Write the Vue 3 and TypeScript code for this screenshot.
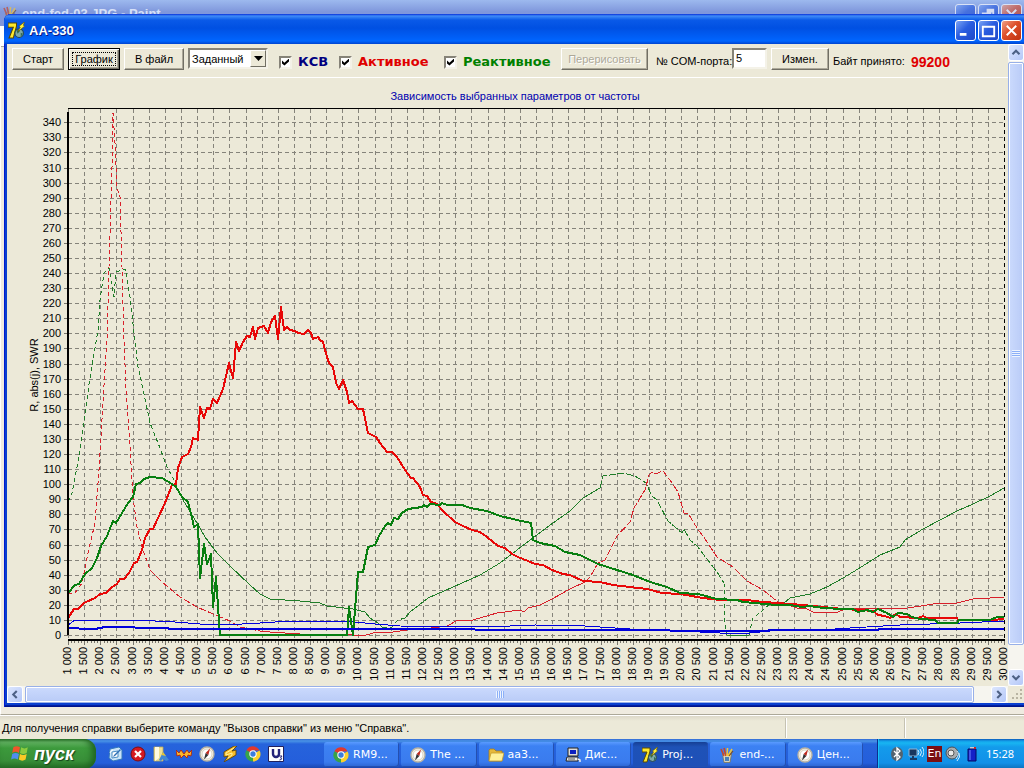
<script setup lang="ts">
import { ref } from 'vue'

interface Trace { cls: string; points: string }
interface Task { icon: string; label: string; active?: boolean }

const swr = ref(true)
const active = ref(true)
const reactive = ref(true)
const range = ref('Заданный')
const port = ref('5')

const X0 = 68
const X1 = 1004
const Y0 = 635
const stepX = (X1 - X0) / 58
const stepY = 15.08

const xTicks = Array.from({ length: 59 }, (_, i) => {
  const f = 1000 + i * 500
  return { x: Math.round(X0 + i * stepX), label: `${Math.floor(f / 1000)} ${String(f % 1000).padStart(3, '0')}` }
})
const yTicks = Array.from({ length: 35 }, (_, i) => ({ y: Math.round(Y0 - i * stepY), label: String(i * 10) }))
const minorTicks = Array.from({ length: 291 }, (_, i) => Math.round(X0 + (i * (X1 - X0)) / 290))

const traces: Trace[] = [
  { cls: 'thin green dash', points: '68,502 72,493 77,467 83,430 89,384 98,330 100,300 104,273 109,268 112,287 114,297 116,272 125,269 127,278 130,297 134,333 138,367 143,389 150,423 160,448 167,467 173,478 183,500' },
  { cls: 'thin green', points: '183,500 197,523 205,537 217,553 230,566 250,585 260,594 270,599 300,601 320,603 327,606 353,609 365,612 370,618 378,623 383,628' },
  { cls: 'thin green dash', points: '383,628 392,627 398,620 405,618' },
  { cls: 'thin green', points: '405,618 410,612 428,598 453,587 480,575 500,563 517,550 533,538 553,523 570,511 583,498 600,488' },
  { cls: 'thin green long', points: '600,488 603,476 623,473 635,476 646,483 652,496 657,500 668,521 682,533 684,529 690,540 697,546 717,572 724,583' },
  { cls: 'thin green dash', points: '724,583 725,623 727,635' },
  { cls: 'thin green', points: '727,635 749,635' },
  { cls: 'thin green dash', points: '749,635 753,618 763,610 770,604' },
  { cls: 'thin green', points: '770,604 783,604 790,598 810,594 827,587 843,578 858,569 880,555 900,547 905,540 923,529 957,511 973,504 990,496 1004,488' },
  { cls: 'thin red dash', points: '68,593 75,593 82,583 88,553 95,523 99,470 104,385 107,340 109,267 112,167 113,113 115,143 117,188 120,197 122,267 124,340 126,389 130,447 133,497 137,527 142,547 150,570' },
  { cls: 'thin red long', points: '150,570 162,582 180,597 197,607 213,614 230,621 240,627 260,631' },
  { cls: 'thin red', points: '260,631 270,632 300,634 340,634 363,636 373,633 393,632 407,630 423,629 447,626 458,620 473,620 497,613 520,610 524,612 528,608 540,605 552,599 570,589 585,582' },
  { cls: 'thin red long', points: '585,582 590,577 598,563 605,560 617,536 630,522 634,508 645,490 649,475 652,472 655,474 663,471 670,480 678,492 684,513 688,513 697,528 705,539 717,557 733,567 747,581 763,590 778,602' },
  { cls: 'thin red', points: '778,602 785,604 797,608 807,609 813,612 838,612 845,609 908,608 927,605 940,603 957,603 973,599 990,598 1004,597' },
  { cls: 'thin blue', points: '68,625 75,620 150,620 155,621 175,622 200,624 225,625 260,623 290,621 345,621 355,622 375,624 400,626 480,627 510,626 535,625 585,626 630,629 680,631 720,633 750,633 770,631 820,630 850,628 900,625 960,623 1004,621' },
  { cls: 'thick red', points: '68,618 74,609 78,609 84,603 95,598 100,594 106,593 112,587 117,584 120,579 124,579 129,573 134,563 137,562 142,550 145,538 150,529 153,529 158,518 165,503 172,485 176,484 178,468 182,457 188,454 191,447 193,438 198,440 200,407 204,418 207,408 210,409 213,399 217,403 223,389 229,363 233,378 236,342 239,351 243,342 247,336 250,337 253,327 255,339 258,328 264,326 268,333 271,322 275,316 278,339 281,307 284,330 287,327 290,330 295,331 298,333 304,334 308,330 311,333 313,339 318,337 320,340 323,342 327,357 329,363 333,367 336,383 339,389 343,380 347,392 349,403 352,401 358,409 363,409 368,433 376,437 380,443 387,452 392,452 397,457 405,470 411,478 413,478 420,487 423,495 427,496 431,502 437,504 443,511 455,522 463,526 472,530 480,532 487,537 498,546 505,548 512,554 518,557 528,561 535,564 543,565 552,570 563,574 570,575 583,581 600,582 613,585 630,587 647,589 662,593 680,594 703,598 720,600 747,600 763,602 778,603 803,605 823,607 843,609 860,610 873,611 878,615 885,616 890,618 896,614 900,617 918,618 923,616 927,618 957,618 958,620 993,620 1004,619' },
  { cls: 'thick green', points: '68,593 75,585 79,584 85,574 92,568 97,558 101,546 107,536 113,521 116,523 122,513 128,503 133,497 136,484 140,483 144,479 150,477 162,478 167,481 172,484 176,487 182,497 188,502 192,518 194,527 198,524 200,578 204,544 207,564 211,554 213,607 216,577 220,635 347,635 349,607 353,635 358,572 363,572 368,547 375,545 379,536 385,526 388,523 391,525 394,518 398,519 402,513 408,509 422,507 424,505 427,507 430,504 440,505 442,503 447,505 462,505 470,508 487,511 500,516 517,520 531,523 533,540 540,543 555,546 565,552 580,555 598,564 617,570 633,575 650,582 667,587 680,593 698,594 717,599 737,600 743,602 777,605 790,605 802,607 810,606 823,608 843,609 853,609 858,612 867,610 873,612 878,609 887,613 893,617 898,613 907,614 912,617 920,619 935,620 938,623 957,623 959,620 990,620 997,617 1004,617' },
  { cls: 'thick blue', points: '68,628 74,628 84,629 95,629 105,627 130,627 140,628 165,628 172,629 474,629 476,630 665,630 675,631 760,631 776,630 877,630 880,629 1004,629' },
]

const quick = ['desktop', 'stop', 'note', 'crown', 'compass', 'winamp', 'chrome', 'u3']
const quickNames = ['Рабочий стол', 'Закрыть', 'Заметки', 'Корона', 'Компас', 'Плеер', 'Браузер', 'U3']
const tasks: Task[] = [
  { icon: 'chrome', label: 'RM9...' },
  { icon: 'compass', label: 'The ...' },
  { icon: 'folder', label: 'aa3...' },
  { icon: 'pc', label: 'Дис...' },
  { icon: 'seven', label: 'Proj...', active: true },
  { icon: 'paint', label: 'end-...' },
  { icon: 'compass', label: 'Цен...' },
]
</script>

<template>
  <div class="screen">
    <svg class="defs" aria-hidden="true">
      <symbol id="seven" viewBox="0 0 16 16">
        <path d="M0 1h8v3L5 15H1L5 5H0z" fill="#ffe92c" stroke="#5a4a00" stroke-width="1" />
        <circle cx="10.5" cy="10.5" r="4" fill="#7fa9a5" stroke="#26474c" />
        <path d="M8 8l3-1v2l-2 2zM12 10l2 1-2 3z" fill="#2f6b55" />
        <path d="M15.500 0l-5 4 1 1-2 4 6-5-1-1z" fill="#ffef3a" stroke="#665600" stroke-width=".6" />
      </symbol>
      <symbol id="paint" viewBox="0 0 16 16">
        <path d="M3.500 7h9l-1.500 8.500H5z" fill="#d8d5bd" stroke="#77735c" stroke-width=".8" />
        <path d="M5 9L2 2M7 9L5 1" fill="none" stroke="#c8472b" stroke-width="1.600" />
        <path d="M8 9l.5-8M9 9l4-7" fill="none" stroke="#f0c33b" stroke-width="1.600" />
        <path d="M10 9l4-5" fill="none" stroke="#7d4a20" stroke-width="1.200" />
        <path d="M6 10h4v4H6z" fill="#4a7fb8" />
      </symbol>
      <symbol id="chrome" viewBox="0 0 16 16">
        <path d="M8 8L1.4 4.2A7.5 7.5 0 0 1 14.6 4.4H8z" fill="#e2392d" />
        <path d="M8 8L14.6 4.4A7.5 7.5 0 0 1 8 15.5z" fill="#fbd02c" />
        <path d="M8 8v7.5A7.5 7.5 0 0 1 1.4 4.2z" fill="#38a349" />
        <circle cx="8" cy="8" r="3.7" fill="#fff" /><circle cx="8" cy="8" r="2.7" fill="#3b7ddd" />
      </symbol>
      <symbol id="compass" viewBox="0 0 16 16">
        <circle cx="8" cy="8" r="7" fill="#f6f2e4" stroke="#b9b3a4" stroke-width="1.4" />
        <circle cx="8" cy="8" r="5" fill="#fff" stroke="#d9d3c2" />
        <path d="M11 2.5L9.4 9 6.6 7z" fill="#c12a1e" /><path d="M5 13.5L6.6 7l2.8 2z" fill="#333" />
      </symbol>
      <symbol id="folder" viewBox="0 0 16 16">
        <path d="M1 3l1-1h4l2 2h6v10H1z" fill="#e6b83c" stroke="#a87c17" stroke-width=".8" />
        <path d="M3 6h13l-2 8H1z" fill="#fff09a" stroke="#c49a2c" stroke-width=".8" />
      </symbol>
      <symbol id="pc" viewBox="0 0 16 16">
        <path d="M3 1h10v8H3z" fill="#ddd" stroke="#222" /><path d="M5 3h6v4H5z" fill="#0b1fc0" />
        <path d="M2 10h11v4H1z" fill="#eee" stroke="#222" /><path d="M3 12h7" stroke="#555" />
        <path d="M13 12l2 1v2" fill="none" stroke="#eee" stroke-width="1.5" />
      </symbol>
      <symbol id="desktop" viewBox="0 0 16 16">
        <path d="M3 3l9-2 3 3v9l-9 2-4-3z" fill="#c9e4f8" stroke="#3479bd" />
        <path d="M5 6l6-1v6l-6 1z" fill="#fff" stroke="#4a8cc4" /><path d="M7 9l6-6 1 1-6 6-2 1z" fill="#2f6fb5" />
        <path d="M3 7a4 4 0 0 1 3-3" stroke="#fff" fill="none" />
      </symbol>
      <symbol id="stop" viewBox="0 0 16 16">
        <circle cx="8" cy="8" r="7" fill="#d41820" stroke="#7d0c12" />
        <path d="M5 5l6 6M11 5l-6 6" stroke="#fff" stroke-width="2.2" />
      </symbol>
      <symbol id="note" viewBox="0 0 16 16">
        <path d="M1 1h9v14H1z" fill="#efe093" stroke="#b9a85c" stroke-width=".8" />
        <path d="M2 1h4v11l-4 3z" fill="#fffbe0" /><path d="M6 14l4-8 6 8-3 1-3-2-2 2z" fill="#3f87d6" /><path d="M8.500 9L10 6l3 4z" fill="#e9c52d" />
      </symbol>
      <symbol id="crown" viewBox="0 0 16 16">
        <path d="M0 4l3 3 2-3 3 4 3-4 2 3 3-3-1 6-3-1-1 3-3-3-3 3-1-3-3 1z" fill="#f9b52a" stroke="#b1220f" stroke-width=".9" />
      </symbol>
      <symbol id="winamp" viewBox="0 0 16 16">
        <path d="M12 0L2 6v5l4-1-4 6 12-7V4l-4 1 5-5z" fill="#f9bd2a" stroke="#5c4510" stroke-width=".9" /><path d="M12 2L4 7v2l6-2v2l-4 3" fill="none" stroke="#fff0a0" />
      </symbol>
      <symbol id="u3" viewBox="0 0 16 16">
        <path d="M.5.5h15v15H.5z" fill="#fff" stroke="#20205c" />
        <path d="M5 3v5a3 3 0 0 0 6 0V3" fill="none" stroke="#24247a" stroke-width="2.4" /><path d="M11 10h3l-1.5 2q3 1-1 2" fill="none" stroke="#24247a" />
      </symbol>
      <symbol id="flag" viewBox="0 0 18 16">
        <path d="M3 2q3-2 6 0L8 7q-3-2-6 0z" fill="#f0552b" /><path d="M10 2q3 2 6 0l-1 5q-3 2-6 0z" fill="#8ccb3f" />
        <path d="M2 8q3-2 6 0l-1 5q-3-2-6 0z" fill="#4f8df0" /><path d="M9 8q3 2 6 0l-1 5q-3 2-6 0z" fill="#fbc926" />
      </symbol>
    </svg>

    <div class="desktop">
      <div class="paint-window">
        <header class="paint-title">
          <svg class="ico"><use href="#paint" /></svg>
          <span class="paint-name">end-fed-03.JPG - Paint</span>
          <span class="caption"><i class="cb" /><i class="cb"><svg viewBox="0 0 20 20"><path d="M8 5h7v7h-2M8 7h7M4 9h8v7H4zM4 10h8" /></svg></i><i class="cb close"><svg viewBox="0 0 20 20"><path d="M5 5l10 10M15 5L5 15" /></svg></i></span>
        </header>
        <div class="paint-body" />
        <footer class="paint-status"><span class="help">Для получения справки выберите команду "Вызов справки" из меню "Справка".</span><span class="cell" /><span class="cell" /></footer>
      </div>

      <main class="window">
        <header class="title">
          <svg class="ico"><use href="#seven" /></svg>
          <h1>AA-330</h1>
          <span class="caption">
            <button class="cb" aria-label="Свернуть"><svg viewBox="0 0 20 20"><path d="M4 14h7" stroke-width="3" /></svg></button>
            <button class="cb" aria-label="Развернуть"><svg viewBox="0 0 20 20"><path d="M4 6h12M4 5v11h12V5" /></svg></button>
            <button class="cb close" aria-label="Закрыть"><svg viewBox="0 0 20 20"><path d="M5 5l10 10M15 5L5 15" /></svg></button>
          </span>
        </header>

        <div class="client">
          <div class="content">
            <form class="toolbar" @submit.prevent>
              <button type="button" class="btn b-small">Старт</button>
              <button type="button" class="btn b-small default"><span>График</span></button>
              <button type="button" class="btn b-file">В файл</button>
              <span class="combo">
                <select v-model="range" aria-label="Диапазон"><option>Заданный</option></select>
                <span class="drop"><svg viewBox="0 0 9 5"><path d="M0 0h9L4.500 5z" /></svg></span>
              </span>
              <label class="check c-swr"><input v-model="swr" type="checkbox"><span>КСВ</span></label>
              <label class="check c-act"><input v-model="active" type="checkbox"><span>Активное</span></label>
              <label class="check c-rea"><input v-model="reactive" type="checkbox"><span>Реактивное</span></label>
              <button type="button" class="btn b-redraw" disabled>Перерисовать</button>
              <label class="port" for="port">№ COM-порта:</label>
              <input id="port" v-model="port" class="field" type="text">
              <button type="button" class="btn b-change">Измен.</button>
              <span class="bytes">Байт принято:</span>
              <output class="count">99200</output>
            </form>

            <svg class="chart" viewBox="7 78 1001 608" role="img" aria-label="Зависимость выбранных параметров от частоты">
              <text class="heading" x="515" y="100" text-anchor="middle">Зависимость выбранных параметров от частоты</text>
              <g class="grid">
                <path v-for="t in yTicks" :key="'h' + t.label" :d="`M68 ${t.y + 0.5}H1004`" />
                <path v-for="t in xTicks" :key="'v' + t.label" :d="`M${t.x + 0.5} 109V639`" />
              </g>
              <g class="ticks">
                <path v-for="t in yTicks" :key="t.label" :d="`M64 ${t.y + 0.5}H68`" />
                <path v-for="t in xTicks" :key="t.label" :d="`M${t.x + 0.5} 640V645`" />
                <path v-for="(x, i) in minorTicks" :key="i" :d="`M${x + 0.5} 640V643`" />
              </g>
              <path class="frame" d="M68 108.5H1005" />
              <path class="frame right" d="M1004.5 109V640" />
              <polyline v-for="(t, i) in traces" :key="i" :class="t.cls" :points="t.points" />
              <path class="axis" d="M68 112V635M68 640H1005" />
              <g class="labels">
                <text v-for="t in yTicks" :key="t.label" x="61" :y="t.y + 4" text-anchor="end">{{ t.label }}</text>
                <text v-for="t in xTicks" :key="t.label" :transform="`translate(${t.x + 3} 647) rotate(-90)`" text-anchor="end">{{ t.label }}</text>
                <text transform="translate(38 375) rotate(-90)" text-anchor="middle">R, abs(j), SWR</text>
              </g>
            </svg>
          </div>

          <div class="vbar">
            <button class="sb" aria-label="Вверх"><svg viewBox="0 0 16 16"><path d="M4 10l4-4 4 4" /></svg></button>
            <div class="thumb v"><i /></div>
            <span class="rest" />
            <button class="sb" aria-label="Вниз"><svg viewBox="0 0 16 16"><path d="M4 6l4 4 4-4" /></svg></button>
          </div>
          <div class="hbar">
            <button class="sb" aria-label="Влево"><svg viewBox="0 0 16 16"><path d="M10 4L6 8l4 4" /></svg></button>
            <div class="thumb h"><i /></div>
            <span class="rest" />
            <button class="sb" aria-label="Вправо"><svg viewBox="0 0 16 16"><path d="M6 4l4 4-4 4" /></svg></button>
          </div>
          <svg class="grip" viewBox="0 0 16 16"><path d="M12 4h2M8 8h2M12 8h2M4 12h2M8 12h2M12 12h2" /></svg>
        </div>
      </main>
    </div>

    <nav class="taskbar">
      <button class="start"><svg><use href="#flag" /></svg><span>пуск</span></button>
      <div class="quick">
        <button v-for="(q, i) in quick" :key="q" :aria-label="quickNames[i]"><svg><use :href="'#' + q" /></svg></button>
      </div>
      <div class="tasks">
        <button v-for="t in tasks" :key="t.label" :class="{ on: t.active }"><svg><use :href="'#' + t.icon" /></svg><span>{{ t.label }}</span></button>
      </div>
      <div class="tray">
        <svg viewBox="0 0 16 16"><ellipse cx="8" cy="8" rx="6" ry="7" fill="#53636f" /><path d="M5 5l6 6-3 3V2l3 3-6 6" fill="none" stroke="#fff" stroke-width="1.3" /></svg>
        <svg viewBox="0 0 16 16"><path d="M1 3h8v7H1z" fill="#17365f" stroke="#93b5d5" /><path d="M2 13h7M5 10v3" stroke="#173a66" stroke-width="2" /><path d="M10 4q2 2 0 5M12 3q3 3 0 7M14 1q4 5 0 10" fill="none" stroke="#d8efff" /></svg>
        <span class="lang">En</span>
        <svg viewBox="0 0 16 16"><circle cx="7" cy="7" r="6" fill="#a9adb0" stroke="#4b5358" /><circle cx="6" cy="7" r="3" fill="#e9e9e9" stroke="#555" /><path d="M12 5q3 3-1 8M14 7q2 4-2 8" fill="none" stroke="#d8efff" /></svg>
        <svg viewBox="0 0 16 16"><path d="M6 1h4v2H6z" fill="#ccc" /><path d="M4 3h8v12H4z" fill="#1420c8" stroke="#050b60" /><path d="M6 4v10" stroke="#6f86ff" /><path d="M10 1h2v2h-2z" fill="#c22" /></svg>
        <time>15:28</time>
      </div>
    </nav>
  </div>
</template>

<style>
html, body { margin: 0; }
#app { min-height: 100vh; }
</style>

<style scoped>
* { box-sizing: border-box; }
.screen { display: flex; flex-direction: column; min-height: 100vh; overflow: hidden; background: #ece9d8; font: 11px/14px "Liberation Sans", Arial, sans-serif; color: #000; }
.defs { display: none; }
button { font: inherit; color: inherit; padding: 0; cursor: default; }
.desktop { flex: 1; display: grid; overflow: hidden; }
.paint-window, .window { grid-area: 1 / 1; min-width: 0; }
.paint-window { display: flex; flex-direction: column; background: #efebe0; }
.paint-title { display: flex; align-items: center; height: 26px; padding: 2px 2px 0; background: linear-gradient(#9db9ee, #7f97dc 45%, #8095da); color: #d6e0f8; font: bold 13px/16px "Liberation Sans", Arial, sans-serif; }
.paint-title .ico { width: 16px; height: 16px; margin-right: 4px; opacity: .7; }
.paint-title .cb { opacity: .65; }
.paint-body { flex: 1; border-left: 1px solid #fff; border-bottom: 1px solid #aca899; background: linear-gradient(#fff 20px, #aca899 20px, #aca899 21px, #efebe0 21px); }
.paint-status { display: flex; align-items: center; height: 24px; padding: 0 1px 0 2px; border-top: 1px solid #fff; background: linear-gradient(#dcd8c9, #ece9d8 5px); }
.help { flex: 1; }
.cell { width: 119px; height: 20px; border-left: 1px solid #c5c2b2; box-shadow: inset 1px 0 #fff; }

.window { display: flex; flex-direction: column; margin: 14px -1px 32px 4px; border-radius: 7px 0 0 0; overflow: hidden; background: #0a3fd0; padding: 0 1px 4px 3px; box-shadow: inset 1px 0 #0019cf, inset 0 -1px #00138c, inset 0 -2px #001ea0; z-index: 1; }
.title { display: flex; align-items: center; height: 30px; margin: 0 0 0 -3px; padding: 3px 2px 0 4px; background: linear-gradient(#0831d9 0, #3f8cf7 2px, #0a5ae8 6px, #0050e2 14px, #005ef6 23px, #0066ff 27px, #0043cf 30px); }
.title .ico { width: 17px; height: 17px; margin-right: 4px; }
h1 { margin: 0; font: bold 13px/16px "Liberation Sans", Arial, sans-serif; color: #fff; text-shadow: 1px 1px #0a1883; }
.caption { display: flex; gap: 2px; margin-left: auto; }
.cb { display: block; width: 21px; height: 21px; border: 1px solid #fff; border-radius: 3px; background: linear-gradient(135deg, #7ca4f4, #2a5de0 45%, #1e48c8); }
.cb.close { background: linear-gradient(135deg, #f0a086, #dd4f29 45%, #bf3210); }
.cb svg { display: block; width: 100%; height: 100%; fill: none; stroke: #fff; stroke-width: 2; }

.client { flex: 1; display: grid; grid-template: minmax(0, 1fr) 17px / minmax(0, 1fr) 16px; background: #ece9d8; }
.content { display: flex; flex-direction: column; min-width: 0; }
.toolbar { display: flex; align-items: flex-start; gap: 4px; height: 34px; padding: 4px 0 0 5px; border-bottom: 1px solid #fff; white-space: nowrap; }
.btn { flex: none; height: 22px; border: 1px solid; border-color: #fff #716f64 #716f64 #fff; background: #ece9d8; box-shadow: inset -1px -1px #aca899; border-radius: 0; }
.b-small { width: 52px; }
.b-file { width: 60px; }
.b-redraw { width: 87px; color: #aca899; text-shadow: 1px 1px #fff; }
.b-change { width: 58px; }
.default { border: 1px solid #000; box-shadow: inset 1px 1px #fff, inset -1px -1px #716f64, inset -2px -2px #aca899; }
.default span { display: block; margin: 0 3px; border: 1px dotted #000; line-height: 12px; }
.combo { position: relative; flex: none; width: 80px; height: 21px; margin-right: 7px; }
select { appearance: none; width: 100%; height: 21px; padding: 0 0 0 2px; border: 2px solid; border-color: #868378 #f4f2e8 #f4f2e8 #868378; border-radius: 0; background: #fff; font: inherit; color: #000; }
.drop { position: absolute; right: 2px; top: 2px; display: flex; align-items: center; justify-content: center; width: 16px; height: 17px; border: 1px solid; border-color: #fff #716f64 #716f64 #fff; background: #ece9d8; pointer-events: none; }
.drop svg { width: 9px; height: 5px; }
.check { flex: none; display: flex; align-items: center; gap: 6px; height: 28px; font: bold 13px/16px "DejaVu Sans", Verdana, sans-serif; }
.check input { appearance: none; position: relative; flex: none; width: 13px; height: 13px; margin: 0; border: 2px solid; border-color: #868378 #f4f2e8 #f4f2e8 #868378; background: #fff; }
.check input:checked::after { content: ""; position: absolute; inset: 1px; background: #000; clip-path: polygon(0 30%, 35% 62%, 100% 0, 100% 42%, 35% 100%, 0 70%); }
.c-swr { width: 56px; color: #000080; }
.c-act { width: 101px; color: #e00000; }
.c-rea { width: 113px; color: #008000; }
.port { flex: none; width: 76px; padding: 6px 0 0 4px; }
.field { flex: none; width: 35px; height: 21px; padding: 0 2px 1px; border: 2px solid; border-color: #868378 #f4f2e8 #f4f2e8 #868378; background: #fff; font: inherit; }
.bytes { flex: none; width: 74px; padding-top: 6px; }
.count { padding-top: 6px; font: bold 14px/16px "Liberation Sans", Arial, sans-serif; color: #e00000; }

.chart { flex: 1; display: block; width: 100%; min-height: 0; overflow: visible; font: 11px "Liberation Sans", Arial, sans-serif; }
.heading { fill: #0000b0; }
.chart path, polyline { fill: none; shape-rendering: crispEdges; }
.grid path { stroke: #85837a; stroke-dasharray: 4 3; }
.ticks path { stroke: #77756c; }
.chart .frame { stroke: #000; }
.right { stroke-dasharray: 4 3; }
.axis { stroke: #000; stroke-width: 2; }
.thick { stroke-width: 2; stroke-linejoin: round; }
.thin { stroke-width: 1; }
.dash { stroke-dasharray: 4 3; }
.long { stroke-dasharray: 7 2; }
.red { stroke: #e80808; }
.thin.red { stroke: #d8202a; }
.green { stroke: #087f10; }
.thin.green { stroke: #1f7d28; }
.blue { stroke: #0000dc; }

.vbar { display: flex; flex-direction: column; background: #f6f5ef; }
.hbar { display: flex; padding-right: 1px; background: #f6f5ef; }
.sb { flex: none; width: 16px; height: 17px; border: 1px solid #fff; border-radius: 3px; background: linear-gradient(135deg, #dce6fe, #b5c8f8); }
.sb svg { display: block; width: 100%; height: 100%; fill: none; stroke: #4d6185; stroke-width: 2.4; }
.thumb { display: flex; align-items: center; justify-content: center; border: 1px solid #98b0e8; border-radius: 2px; box-shadow: inset 0 0 0 1px #fff; }
.thumb.v { flex: 584; margin-top: 1px; background: linear-gradient(90deg, #cbdafd, #b9cbf7); }
.vbar .rest { flex: 24; }
.thumb.h { flex: 948; margin-left: 2px; background: linear-gradient(#cbdafd, #b9cbf7); }
.hbar .rest { flex: 17; }
.thumb i { display: block; width: 8px; height: 7px; background: repeating-linear-gradient(90deg, #eef4fe 0 1px, #8cb0f8 1px 2px); }
.thumb.v i { background: repeating-linear-gradient(#eef4fe 0 1px, #8cb0f8 1px 2px); }
.grip { width: 16px; height: 16px; stroke: #b8b4a2; stroke-width: 2; }

.taskbar { flex: none; display: flex; height: 30px; background: linear-gradient(#3168d5 0, #4993e6 2px, #2663dc 5px, #245edb 24px, #1941a5 30px); color: #fff; font: 11px/16px "DejaVu Sans", Verdana, sans-serif; }
.start { flex: none; display: flex; align-items: center; width: 96px; padding-left: 10px; border: 0; border-radius: 0 12px 12px 0; background: linear-gradient(#2f7a2f 0, #65b565 3px, #3c9a3c 9px, #388e38 22px, #256b25); box-shadow: inset -4px 0 6px #1f6420; }
.start svg { width: 20px; height: 18px; }
.start span { margin-left: 4px; font: italic bold 18px/24px "Liberation Sans", Arial, sans-serif; text-shadow: 1px 1px 1px #14401a; }
.quick { flex: none; display: flex; align-items: center; gap: 7px; width: 228px; padding-left: 11px; }
.quick button { width: 16px; height: 16px; border: 0; background: none; }
.quick svg { display: block; width: 16px; height: 16px; }
.tasks { flex: 1; display: flex; gap: 2px; padding: 3px 14px 2px 0; }
.tasks button { flex: 1; min-width: 0; max-width: 160px; display: flex; align-items: center; gap: 4px; padding-left: 9px; border: 0; border-radius: 3px; background: linear-gradient(#5a9bff, #3c81f3 4px, #3a7bee 20px, #2c64d0); box-shadow: inset -1px -1px #2450b0; }
.tasks button.on { background: linear-gradient(#163f94, #1e52b7 5px, #1e50b8); }
.tasks svg { flex: none; width: 16px; height: 16px; }
.tray { flex: none; display: flex; align-items: center; gap: 3px; width: 147px; padding-left: 11px; border-left: 1px solid #0b2f8f; background: linear-gradient(#0c59b9 0, #139ee9 2px, #18b5f2 4px, #139beb 8px, #1290e8 24px, #0d6fb8); box-shadow: inset 1px 0 #18c0f8; }
.tray svg { flex: none; width: 16px; height: 16px; }
.lang { width: 15px; height: 16px; background: #7b0f12; text-align: center; }
time { margin-left: 3px; font: 11px/16px "Noto Sans", sans-serif; }
</style>
